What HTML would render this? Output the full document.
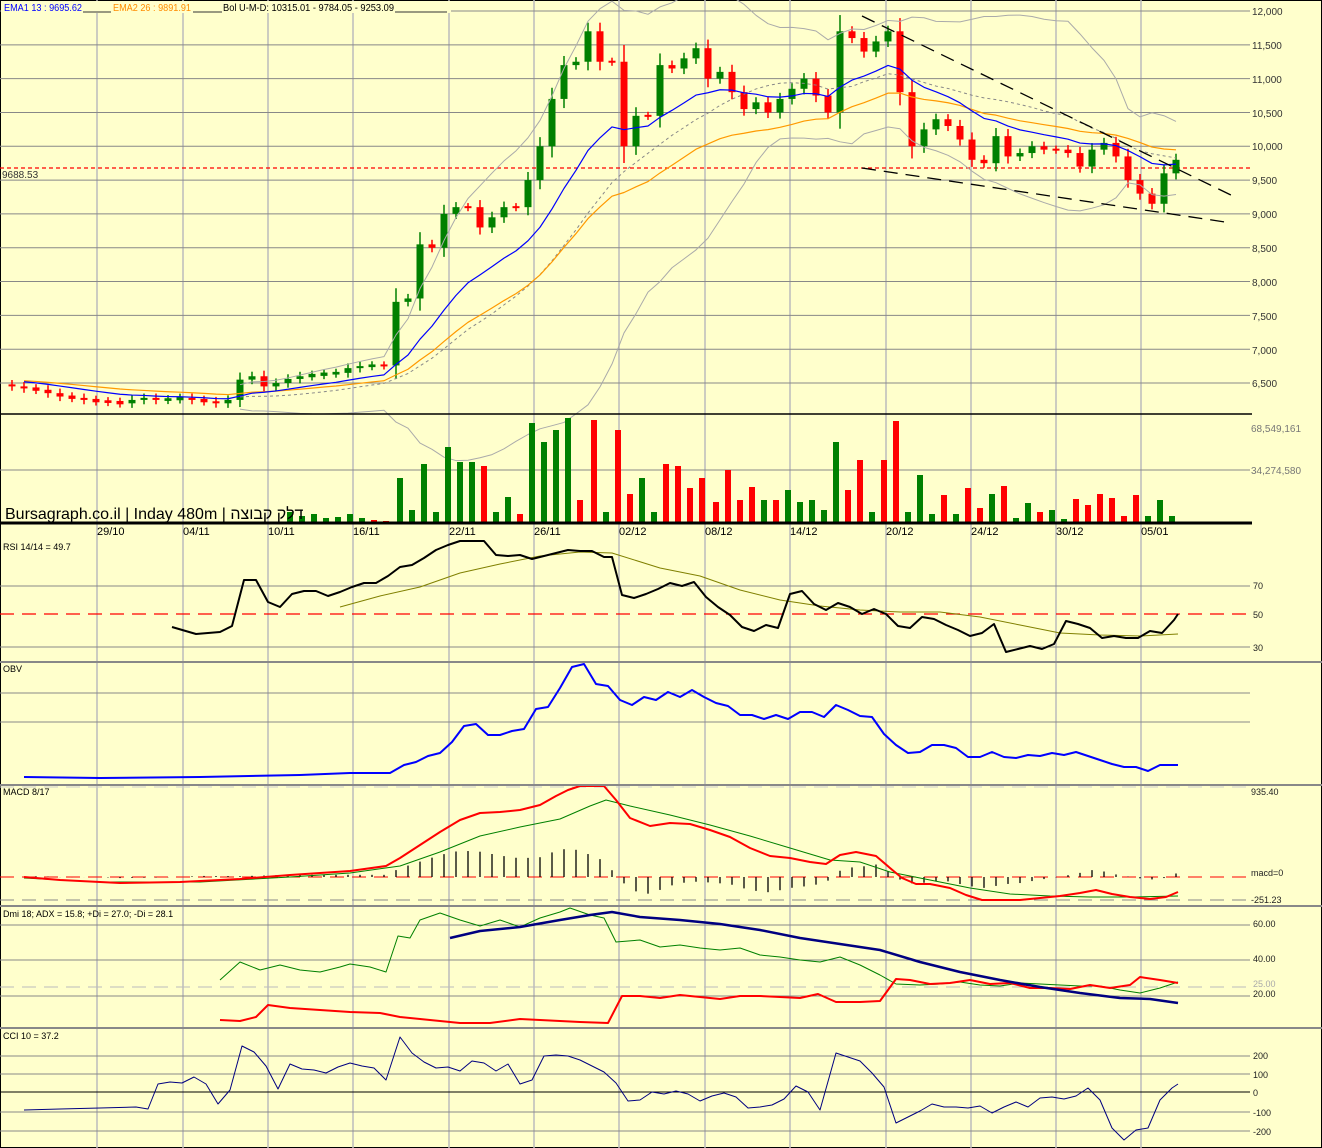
<!DOCTYPE html>
<html><head><meta charset="utf-8">
<style>
html,body{margin:0;padding:0;background:#FFFFCC;}
svg{display:block;font-family:"Liberation Sans",Arial,sans-serif;}
.ax{font-size:10px;fill:#333;}
.ag{font-size:10px;fill:#777;}
</style></head><body>
<svg id="s" width="1322" height="1148" viewBox="0 0 1322 1148" xmlns="http://www.w3.org/2000/svg">
<rect x="0.5" y="0.5" width="1321" height="1147" fill="#FFFFCC" stroke="#000"/>
<g id="grid"></g>
<g id="main"></g>
<line x1="0" y1="414" x2="1252" y2="414" stroke="#000" stroke-width="1.5"/>
<line x1="0" y1="523" x2="1252" y2="523" stroke="#000" stroke-width="3"/>
<line x1="0" y1="662" x2="1322" y2="662" stroke="#888" stroke-width="2"/>
<line x1="0" y1="785" x2="1322" y2="785" stroke="#888" stroke-width="2"/>
<line x1="0" y1="906" x2="1322" y2="906" stroke="#888" stroke-width="2"/>
<line x1="0" y1="1028" x2="1322" y2="1028" stroke="#888" stroke-width="2"/>
<rect x="1" y="1" width="450" height="12" fill="#FFFFCC"/>
<text x="4" y="11" font-size="10" fill="#0000ff" textLength="78" lengthAdjust="spacingAndGlyphs">EMA1 13 : 9695.62</text>
<line x1="83" y1="12" x2="111" y2="12" stroke="#333"/>
<text x="113" y="11" font-size="10" fill="#ff8c00" textLength="78" lengthAdjust="spacingAndGlyphs">EMA2 26 : 9891.91</text>
<line x1="193" y1="12" x2="222" y2="12" stroke="#333"/>
<text x="223" y="11" font-size="10" fill="#000" textLength="171" lengthAdjust="spacingAndGlyphs">Bol U-M-D: 10315.01 - 9784.05 - 9253.09</text>
<line x1="395" y1="12" x2="447" y2="12" stroke="#333"/>
<text x="2" y="178" font-size="10" fill="#333">9688.53</text>
<g class="ax">
<text x="1252" y="15">12,000</text><text x="1252" y="49">11,500</text><text x="1252" y="83">11,000</text>
<text x="1252" y="117">10,500</text><text x="1252" y="150">10,000</text><text x="1252" y="184">9,500</text>
<text x="1252" y="218">9,000</text><text x="1252" y="252">8,500</text><text x="1252" y="286">8,000</text>
<text x="1252" y="320">7,500</text><text x="1252" y="354">7,000</text><text x="1252" y="387">6,500</text>
</g>
<text x="1251" y="432" class="ag">68,549,161</text>
<text x="1251" y="474" class="ag">34,274,580</text>
<text x="5" y="519" font-size="16" fill="#000" style='font-family:"Liberation Sans","Noto Sans CJK JP",sans-serif'>Bursagraph.co.il | Inday 480m | דלק קבוצה</text>
<g font-size="11" fill="#000">
<text x="97" y="535">29/10</text><text x="183" y="535">04/11</text><text x="268" y="535">10/11</text><text x="353" y="535">16/11</text>
<text x="449" y="535">22/11</text><text x="534" y="535">26/11</text><text x="619" y="535">02/12</text><text x="705" y="535">08/12</text>
<text x="790" y="535">14/12</text><text x="886" y="535">20/12</text><text x="971" y="535">24/12</text><text x="1056" y="535">30/12</text>
<text x="1141" y="535">05/01</text>
</g>
<g font-size="9" fill="#000">
<text x="3" y="550">RSI 14/14 = 49.7</text>
<text x="3" y="672">OBV</text>
<text x="3" y="795">MACD 8/17</text>
<text x="3" y="917">Dmi 18; ADX = 15.8; +Di = 27.0; -Di = 28.1</text>
<text x="3" y="1039">CCI 10 = 37.2</text>
</g>
<g font-size="9" fill="#222">
<text x="1253" y="589">70</text><text x="1253" y="618">50</text><text x="1253" y="651">30</text>
<text x="1251" y="795">935.40</text><text x="1251" y="876">macd=0</text><text x="1251" y="903">-251.23</text>
<text x="1253" y="927">60.00</text><text x="1253" y="962">40.00</text><text x="1253" y="987" fill="#aaa">25.00</text><text x="1253" y="997">20.00</text>
<text x="1253" y="1059">200</text><text x="1253" y="1078">100</text><text x="1253" y="1096">0</text><text x="1253" y="1116">-100</text><text x="1253" y="1135">-200</text>
</g>
</svg>
<script>
var NS="http://www.w3.org/2000/svg";
function el(parent,tag,attrs){var e=document.createElementNS(NS,tag);for(var k in attrs)e.setAttribute(k,attrs[k]);document.getElementById(parent).appendChild(e);return e;}
function line(p,x1,y1,x2,y2,c,w,d){var a={x1:x1,y1:y1,x2:x2,y2:y2,stroke:c,"stroke-width":w||1};if(d)a["stroke-dasharray"]=d;return el(p,"line",a);}
function pl(p,pts,c,w,d){var s=[];for(var i=0;i<pts.length;i+=2)s.push(pts[i]+","+pts[i+1]);var a={points:s.join(" "),fill:"none",stroke:c,"stroke-width":w||1,"stroke-linejoin":"round"};if(d)a["stroke-dasharray"]=d;return el(p,"polyline",a);}
var vx=[97,183,268,353,449,534,619,705,790,886,971,1056,1141];
vx.forEach(function(x){line("grid",x,0,x,1148,"#bbb",1.5);});
for(var k=0;k<12;k++){var y=11+k*33.82;line("grid",0,y,1250,y,"#888",1);}
line("grid",0,470,1250,470,"#888",1);
line("grid",0,586,1250,586,"#888",1);line("grid",0,614,1250,614,"#f00",1.2,"14,8");line("grid",0,647,1250,647,"#888",1);
line("grid",0,693,1250,693,"#888",1);line("grid",0,722,1250,722,"#888",1);
line("grid",0,787,1250,787,"#ccc",1,"14,8");line("grid",0,877,1250,877,"#f00",1,"14,8");line("grid",0,900,1250,900,"#888",1,"14,8");
line("grid",0,925,1250,925,"#888",1);line("grid",0,960,1250,960,"#888",1);line("grid",0,987,1250,987,"#bbb",1,"14,8");line("grid",0,996,1250,996,"#888",1);
line("grid",0,1056,1250,1056,"#888",1);line("grid",0,1074,1250,1074,"#888",1);line("grid",0,1092,1250,1092,"#000",1);line("grid",0,1112,1250,1112,"#888",1);line("grid",0,1131,1250,1131,"#888",1);
line("grid",0,168,1250,168,"#f00",1.2,"4,3");
var C=[6450,6420,6400,6350,6300,6280,6250,6230,6220,6200,6250,6280,6250,6260,6280,6250,6230,6200,6250,
6550,6600,6450,6500,6560,6600,6620,6640,6650,6720,6750,6760,6760,7700,7750,8550,8500,9000,9100,9100,8800,8950,9100,9100,9500,10000,10700,11200,11250,11700,11250,11250,10000,10450,10450,11200,11150,11300,11450,11000,11100,10800,10550,10650,10500,10700,10850,11000,10750,10500,11700,11600,11400,11550,11700,10800,10000,10250,10400,10300,10100,9800,9750,10150,9850,9900,10000,9950,9950,9900,9700,9950,10050,9850,9500,9300,9150,9600,9800];
function Y(p){return 11+(12000-p)*0.06764;}
function X(i){return 12+12*i;}
var prev=6480;
for(var i=0;i<C.length;i++){
 var o=prev,c=C[i];var up=c>o;var col=up?"#008000":"#ff0000";
 var hi=Math.max(o,c)+Math.abs(c-o)*0.15+60,lo=Math.min(o,c)-Math.abs(c-o)*0.15-60;
 line("main",X(i),Y(hi),X(i),Y(lo),col,1.5);
 var t=Y(Math.max(o,c)),b=Y(Math.min(o,c));if(b-t<2){t-=1;b+=1;}
 el("main","rect",{x:X(i)-3.5,y:t,width:7,height:b-t,fill:col});
 prev=c;
}
function ema(n){var a=[],k=2/(n+1),v=C[0]+100;for(var i=0;i<C.length;i++){v=C[i]*k+v*(1-k);a.push(v);}return a;}
var e13=ema(13),e26=ema(26);
var up=[],mid=[],dn=[];
for(var i=0;i<C.length;i++){var s=Math.max(0,i-19),n=i-s+1,m=0;for(var j=s;j<=i;j++)m+=C[j];m/=n;var v=0;for(var j=s;j<=i;j++)v+=(C[j]-m)*(C[j]-m);var sd=Math.sqrt(v/n);up.push(m+2*sd);mid.push(m);dn.push(m-2*sd);}
function ser(a,st){var p=[];for(var i=st;i<a.length;i++){p.push(X(i),Y(a[i]));}return p;}
pl("main",ser(up,19),"#aaa",1);pl("main",ser(dn,19),"#aaa",1);pl("main",ser(mid,19),"#888",1,"3,3");
pl("main",ser(e26,1),"#ff9900",1.2);pl("main",ser(e13,1),"#0000ff",1.2);
line("main",862,16,1235,197,"#000",1.3,"14,8");line("main",862,168,1225,222,"#000",1.3,"14,8");
var V=[[290,512,1],[302,516,1],[314,514,1],[326,518,1],[338,517,1],[350,514,1],[362,518,1],[374,520,0],[386,521,0],[400,478,1],[412,510,1],[424,464,1],[436,512,1],[448,447,1],[460,462,1],[472,462,1],[484,466,0],[496,512,1],[508,497,1],[520,514,0],[532,423,1],[544,442,1],[556,430,1],[568,418,1],[580,500,0],[594,420,0],[606,512,1],[618,430,0],[630,494,0],[642,478,1],[654,512,1],[666,464,0],[678,466,0],[690,488,0],[702,478,0],[716,502,0],[728,470,0],[740,500,0],[752,487,0],[764,500,1],[776,500,0],[788,490,1],[800,502,1],[812,500,1],[824,510,1],[836,442,1],[848,490,0],[860,460,0],[872,512,1],[884,460,0],[896,421,0],[908,512,1],[920,475,1],[932,514,1],[944,495,0],[956,514,1],[968,488,0],[980,508,0],[992,494,1],[1004,486,0],[1016,518,1],[1028,503,1],[1040,512,0],[1052,510,1],[1064,519,1],[1076,499,0],[1088,505,0],[1100,494,0],[1112,498,0],[1124,516,0],[1136,495,0],[1148,516,1],[1160,500,1],[1172,516,1]];
V.forEach(function(v){el("main","rect",{x:v[0]-3,y:v[1],width:6,height:522-v[1],fill:v[2]?"#008000":"#ff0000"});});
pl("main",[340,607,380,596,420,587,460,573,500,564,540,556,580,552,612,553,660,568,700,576,740,590,780,600,820,606,860,610,900,612,940,612,980,617,1020,625,1060,633,1100,635,1140,636,1178,634],"#808000",1);
pl("main",[172,627,196,634,220,632,232,626,244,580,256,580,268,602,280,607,292,594,304,591,316,591,328,596,340,592,352,587,364,583,376,583,388,576,400,567,412,565,424,558,436,550,448,545,460,541,472,541,484,541,496,555,508,556,520,555,532,559,544,556,556,553,568,550,580,551,592,551,604,557,612,557,622,595,634,598,646,594,658,589,670,583,682,586,694,582,706,597,718,607,730,615,742,627,754,631,766,625,778,628,790,594,802,591,814,604,826,610,838,603,850,607,862,614,874,609,886,614,898,626,910,628,922,617,934,619,946,625,958,630,970,636,982,633,994,624,1006,652,1018,649,1030,646,1042,649,1054,644,1066,621,1078,624,1090,628,1102,638,1114,636,1126,638,1138,638,1150,631,1162,633,1174,620,1178,614],"#000",2);
pl("main",[24,777,100,778,200,777,300,775,350,773,390,773,404,765,416,762,428,756,440,753,452,742,464,726,476,724,488,735,500,735,512,731,524,729,536,709,548,707,560,688,572,667,584,664,596,684,608,686,620,700,632,705,644,697,656,700,668,692,680,697,692,690,704,697,716,703,728,706,740,715,752,715,764,719,776,715,788,719,800,712,812,712,824,717,836,705,848,710,860,716,872,717,884,734,896,745,908,753,920,752,932,745,944,745,956,748,968,757,980,757,992,752,1004,757,1016,758,1028,755,1040,756,1052,753,1064,755,1076,752,1088,756,1100,760,1112,764,1124,767,1136,767,1148,771,1160,765,1178,765],"#0000ff",2);
var M=[24,877,60,880,120,883,180,882,240,879,290,875,350,871,386,866,400,858,420,845,440,832,460,820,480,813,500,812,520,810,540,805,556,796,568,790,580,786,604,786,616,800,630,818,650,826,670,823,690,824,710,830,730,837,750,848,770,856,790,858,810,862,826,864,840,855,856,852,876,856,890,868,902,878,916,884,930,884,950,888,966,895,982,900,1000,900,1020,900,1040,898,1060,896,1080,893,1096,890,1112,894,1130,897,1150,899,1166,897,1178,892];
var S=[24,878,100,882,200,882,290,877,350,873,400,866,440,852,480,836,520,827,560,819,590,806,606,800,630,806,670,815,710,825,750,836,790,848,830,860,860,862,890,872,930,880,970,888,1010,894,1050,896,1090,897,1130,897,1178,896];
function interp(a,x){for(var i=0;i<a.length-2;i+=2){if(x>=a[i]&&x<=a[i+2]){var t=(x-a[i])/(a[i+2]-a[i]);return a[i+1]+t*(a[i+3]-a[i+1]);}}return a[a.length-1];}
for(var i=2;i<C.length;i++){var x=X(i);var h=interp(S,x)-interp(M,x);line("main",x,877,x,877-h*1.1,"#000",1.3);}
pl("main",S,"#008000",1);pl("main",M,"#ff0000",2);
pl("main",[220,980,240,962,260,970,280,965,300,970,320,972,340,967,350,964,370,967,386,972,398,936,410,938,420,920,440,913,460,920,480,926,500,920,520,927,540,918,560,912,570,908,590,915,604,918,616,942,640,940,660,947,680,945,700,948,720,950,740,948,760,955,780,957,800,960,820,962,840,957,860,965,880,975,896,984,920,985,940,984,960,982,980,985,1000,986,1020,983,1040,984,1060,985,1080,986,1100,986,1120,990,1140,993,1160,988,1178,982],"#008000",1);
pl("main",[220,1020,240,1021,256,1017,268,1005,290,1008,320,1010,350,1012,380,1013,400,1017,430,1020,460,1023,490,1023,520,1019,560,1021,580,1022,608,1023,622,996,640,996,660,998,680,995,700,997,720,999,740,996,760,996,780,997,800,998,818,994,836,1002,860,1002,880,1001,896,979,910,980,930,984,950,983,970,980,990,984,1010,983,1030,988,1050,988,1070,989,1090,985,1110,988,1130,985,1140,977,1160,980,1178,983],"#ff0000",2);
pl("main",[450,938,480,931,520,927,560,920,590,915,612,912,640,917,680,920,720,924,760,930,800,938,840,944,880,950,920,962,960,972,1000,980,1040,987,1080,993,1120,998,1150,999,1178,1003],"#000080",2.5);
pl("main",[24,1110,60,1109,100,1108,136,1107,148,1109,158,1084,170,1082,182,1083,194,1077,206,1084,218,1104,230,1090,242,1046,254,1052,266,1066,278,1089,290,1064,302,1069,314,1070,326,1073,338,1067,350,1063,362,1066,374,1068,386,1080,400,1037,412,1053,424,1062,436,1068,448,1067,460,1071,472,1061,484,1063,496,1071,508,1064,520,1084,532,1080,544,1056,556,1055,568,1056,580,1060,592,1066,604,1072,616,1083,628,1101,640,1100,652,1092,664,1094,676,1091,688,1094,700,1101,712,1096,724,1093,736,1097,748,1108,760,1107,772,1105,784,1099,796,1086,808,1092,820,1110,836,1053,848,1057,860,1061,872,1073,884,1087,896,1123,908,1117,920,1111,932,1104,944,1107,956,1107,968,1108,980,1106,992,1113,1004,1107,1016,1102,1028,1107,1040,1098,1052,1097,1064,1099,1076,1096,1088,1088,1100,1100,1112,1128,1124,1140,1136,1130,1148,1128,1160,1100,1172,1088,1178,1084],"#000080",1);
</script>
</body></html>
